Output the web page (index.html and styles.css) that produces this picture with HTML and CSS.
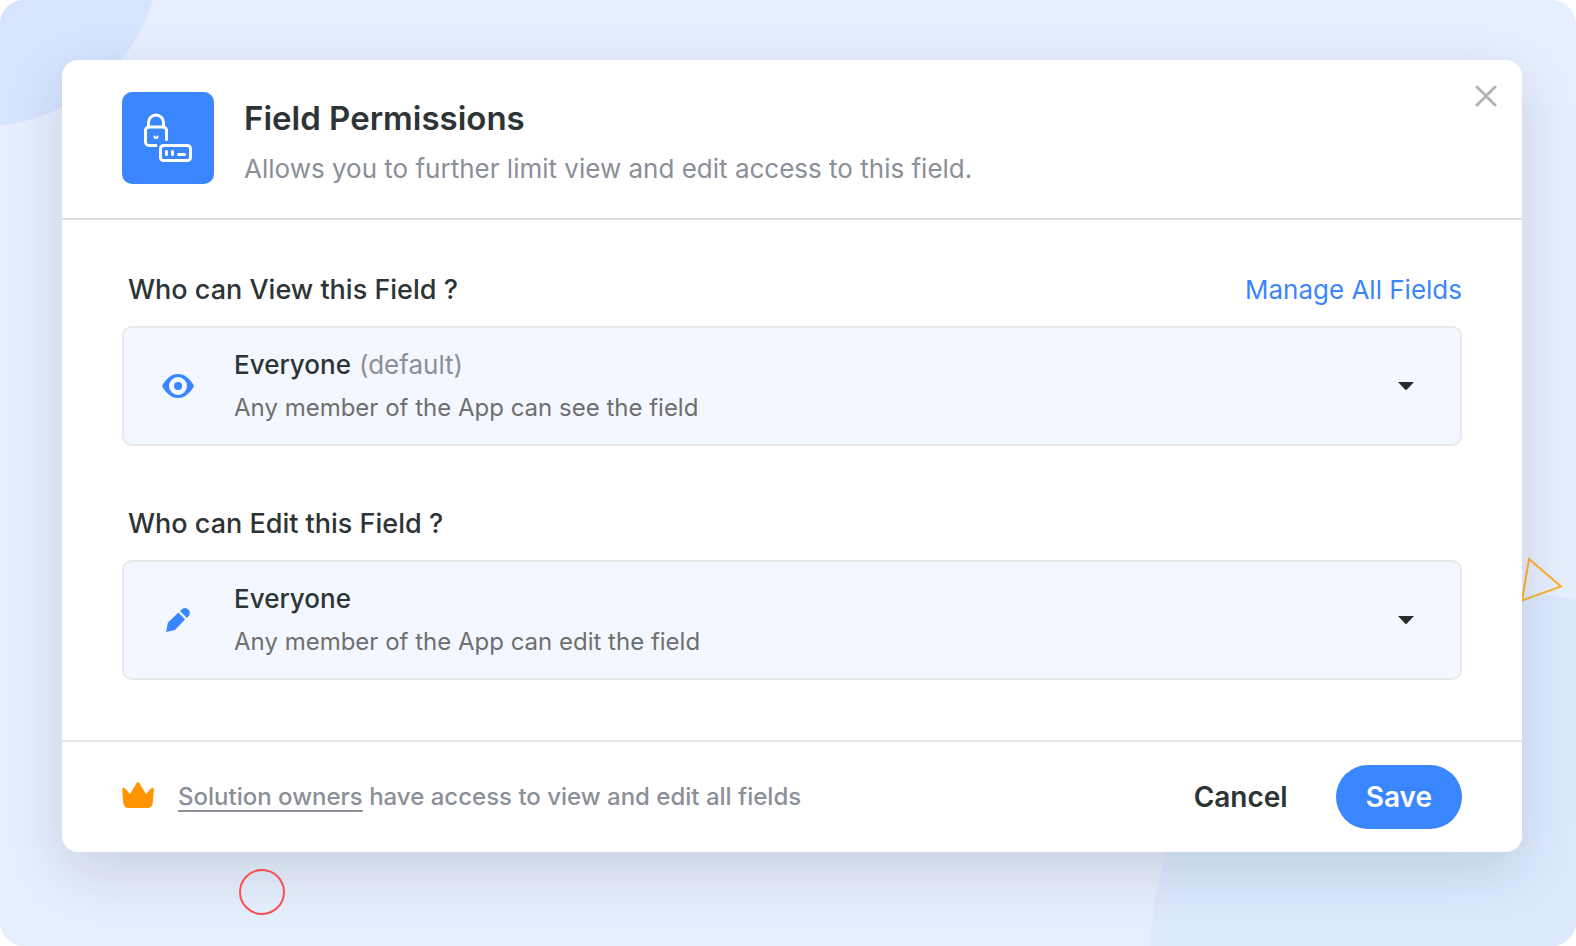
FILE: index.html
```html
<!DOCTYPE html>
<html lang="en">
<head>
    <meta charset="utf-8">
    <title>Field Permissions</title>
    <link rel="stylesheet" href="styles.css">
</head>
<body>
    <div class="page">
        <div class="blob blob-top"></div>
        <div class="blob blob-bottom"></div>
        <div class="ring"></div>
        <svg class="triangle" width="42" height="46" viewBox="0 0 42 46" aria-hidden="true">
            <path d="M8 2L40 29.500L1 43.500Z" fill="none" stroke="#ffb02e" stroke-width="2"/>
        </svg>

        <form class="dialog">
            <header class="dialog-header">
                <div class="header-icon">
                    <svg width="92" height="92" viewBox="0 0 92 92" fill="none" stroke="#fff" stroke-width="3" stroke-linecap="round" stroke-linejoin="round" aria-hidden="true">
                        <path d="M26.500 35V30.500a7.500 7.500 0 0 1 15 0V35"/>
                        <path d="M34 53.500H27a3.500 3.500 0 0 1-3.500-3.500V38.500a3.500 3.500 0 0 1 3.500-3.500H41a3.500 3.500 0 0 1 3.500 3.500V47.500"/>
                        <path d="M32.500 44.500a1.500 1.500 0 0 0 3 0" stroke-width="2"/>
                        <rect x="38.500" y="53.500" width="30" height="15" rx="3"/>
                        <path d="M44.500 59.500V62.500M50.500 59.500V62.500M56.500 62.500H62.500"/>
                    </svg>
                </div>
                <div class="header-text">
                    <h1>Field Permissions</h1>
                    <p>Allows you to further limit view and edit access to this field.</p>
                </div>
                <button type="button" class="close" aria-label="Close">
                    <svg width="22" height="22" viewBox="0 0 22 22" aria-hidden="true">
                        <path d="M2 2L20 20M20 2L2 20" stroke="#b3b3b3" stroke-width="3" stroke-linecap="round"/>
                    </svg>
                </button>
            </header>

            <div class="dialog-body">
                <section>
                    <div class="section-head">
                        <label for="viewAccess">Who can View this Field ?</label>
                        <a href="#">Manage All Fields</a>
                    </div>
                    <div class="picker">
                        <span class="picker-icon">
                            <svg width="32" height="24" viewBox="0 0 32 24" aria-hidden="true">
                                <path d="M0 12C4 4.500 9.500 0 16 0s12 4.500 16 12c-4 7.500-9.500 12-16 12S4 19.500 0 12z" fill="#3a86ff"/>
                                <circle cx="16" cy="12" r="9" fill="#f3f7ff"/>
                                <circle cx="16" cy="12" r="4" fill="#3a86ff"/>
                            </svg>
                        </span>
                        <div class="picker-text">
                            <div class="picker-value">
                                <select id="viewAccess">
                                    <option>Everyone</option>
                                </select>
                                <span class="muted">(default)</span>
                            </div>
                            <p>Any member of the App can see the field</p>
                        </div>
                        <svg class="caret" width="16" height="8" viewBox="0 0 16 8" aria-hidden="true">
                            <path d="M0 0H16L9 7.500Q8 8.300 7 7.500Z" fill="#2b2b2b"/>
                        </svg>
                    </div>
                </section>

                <section>
                    <div class="section-head">
                        <label for="editAccess">Who can Edit this Field ?</label>
                    </div>
                    <div class="picker">
                        <span class="picker-icon">
                            <svg width="24" height="24" viewBox="0 0 24 24" fill="#3a86ff" aria-hidden="true">
                                <path d="M0 24L2 14.500L12.500 4.500L19 11.500L9 22Z"/>
                                <path d="M14 3L16 1.300C18 -0.300 20.500 -0.300 22.300 1.500C24.300 3.500 24.300 6 22.700 8L21 10Z"/>
                            </svg>
                        </span>
                        <div class="picker-text">
                            <div class="picker-value">
                                <select id="editAccess">
                                    <option>Everyone</option>
                                </select>
                            </div>
                            <p>Any member of the App can edit the field</p>
                        </div>
                        <svg class="caret" width="16" height="8" viewBox="0 0 16 8" aria-hidden="true">
                            <path d="M0 0H16L9 7.500Q8 8.300 7 7.500Z" fill="#2b2b2b"/>
                        </svg>
                    </div>
                </section>
            </div>

            <footer class="dialog-footer">
                <svg class="crown" width="32" height="26" viewBox="0 0 32 26" aria-hidden="true">
                    <path d="M2.800 6.300L8 12L14.700 1Q16 -1 17.300 1L24 12L29.200 6.300C30.500 5 32 6 31.800 7.800L30.800 20.500C30.500 24 28.500 26 25.500 26H6.500C3.500 26 1.500 24 1.200 20.500L0.200 7.800C0 6 1.500 5 2.800 6.300Z" fill="#ff9500"/>
                </svg>
                <p><a href="#">Solution owners</a> have access to view and edit all fields</p>
                <button type="button" class="cancel">Cancel</button>
                <button type="submit" class="save">Save</button>
            </footer>
        </form>
    </div>
</body>
</html>
```

FILE: styles.css
```css
* {
    box-sizing: border-box;
}

body {
    margin: 0;
    background: #fff;
    font-family: Inter, "Liberation Sans", sans-serif;
    font-size: 24px;
    color: #2d3436;
}

h1, p {
    margin: 0;
}

button, select {
    margin: 0;
    padding: 0;
    border: 0;
    background: none;
    font-family: inherit;
    color: inherit;
    cursor: pointer;
}

svg {
    display: block;
}

.page {
    position: relative;
    min-height: 100vh;
    padding: 60px 54px 94px 62px;
    border-radius: 24px;
    background: #e6effe;
    overflow: hidden;
}

/* background shapes */
.blob {
    position: absolute;
    border-radius: 50%;
}

.blob-top {
    top: -230px;
    left: -195px;
    width: 356px;
    height: 356px;
    background: #d6e4ff;
}

.blob-bottom {
    right: -306px;
    bottom: -380px;
    width: 732px;
    height: 732px;
    background: #ddeafe;
}

.ring {
    position: absolute;
    left: 239px;
    bottom: 31px;
    width: 46px;
    height: 46px;
    border: 2px solid #fb4f50;
    border-radius: 50%;
    z-index: 2;
}

.triangle {
    position: absolute;
    right: 13px;
    bottom: 343px;
}

/* dialog */
.dialog {
    position: relative;
    border-radius: 16px;
    background: #fff;
    box-shadow: 0 20px 60px rgba(20, 30, 45, 0.14);
}

.dialog-header {
    display: flex;
    gap: 30px;
    padding: 32px 25px 32px 60px;
    border-bottom: 2px solid #dcdcdc;
}

.header-icon {
    width: 92px;
    height: 92px;
    border-radius: 10px;
    background: #3a86ff;
}

.header-text {
    flex: 1;
}

.header-text h1 {
    padding-top: 4px;
    font-size: 33px;
    line-height: 44px;
    font-weight: 600;
}

.header-text p {
    padding-top: 12px;
    font-size: 26px;
    line-height: 34px;
    color: #8a8f98;
}

.close {
    align-self: flex-start;
    margin-top: -7px;
}

.dialog-body {
    display: flex;
    flex-direction: column;
    gap: 60px;
    padding: 52px 60px 60px;
}

.section-head {
    display: flex;
    justify-content: space-between;
    align-items: baseline;
    height: 36px;
    margin-bottom: 18px;
    padding-left: 6px;
    line-height: 36px;
}

.section-head label {
    font-size: 27px;
    font-weight: 500;
}

.section-head a {
    font-size: 26px;
    color: #3a86ff;
    text-decoration: none;
}

.picker {
    display: flex;
    align-items: center;
    height: 120px;
    padding-right: 46px;
    border: 2px solid #e9e9e9;
    border-radius: 10px;
    background: #f3f7ff;
}

.picker-icon {
    display: flex;
    justify-content: center;
    width: 108px;
}

.picker-text {
    flex: 1;
    padding-left: 2px;
}

.picker-value {
    display: flex;
    gap: 8px;
    font-size: 26px;
    line-height: 36px;
}

.picker-value select {
    appearance: none;
    field-sizing: content;
    font-size: 26px;
    line-height: 36px;
    font-weight: 500;
}

.muted {
    color: #8a8f98;
}

.picker-text p {
    margin-top: 8px;
    line-height: 34px;
    color: #6f6f6f;
}

.dialog-footer {
    display: flex;
    align-items: center;
    height: 112px;
    padding: 0 60px;
    border-top: 2px solid #e6e6e6;
}

.crown {
    margin-bottom: 4px;
}

.dialog-footer p {
    flex: 1;
    padding-left: 24px;
    font-weight: 500;
    line-height: 34px;
    color: #8a8f98;
}

.dialog-footer p a {
    color: inherit;
    text-decoration: underline 2px;
    text-underline-offset: 5px;
    text-decoration-skip-ink: none;
}

.cancel, .save {
    height: 64px;
    font-size: 28px;
    font-weight: 600;
}

.cancel {
    margin-right: 48px;
}

.save {
    padding: 0 30px;
    border-radius: 32px;
    background: #3a86ff;
    color: #fff;
}
```
